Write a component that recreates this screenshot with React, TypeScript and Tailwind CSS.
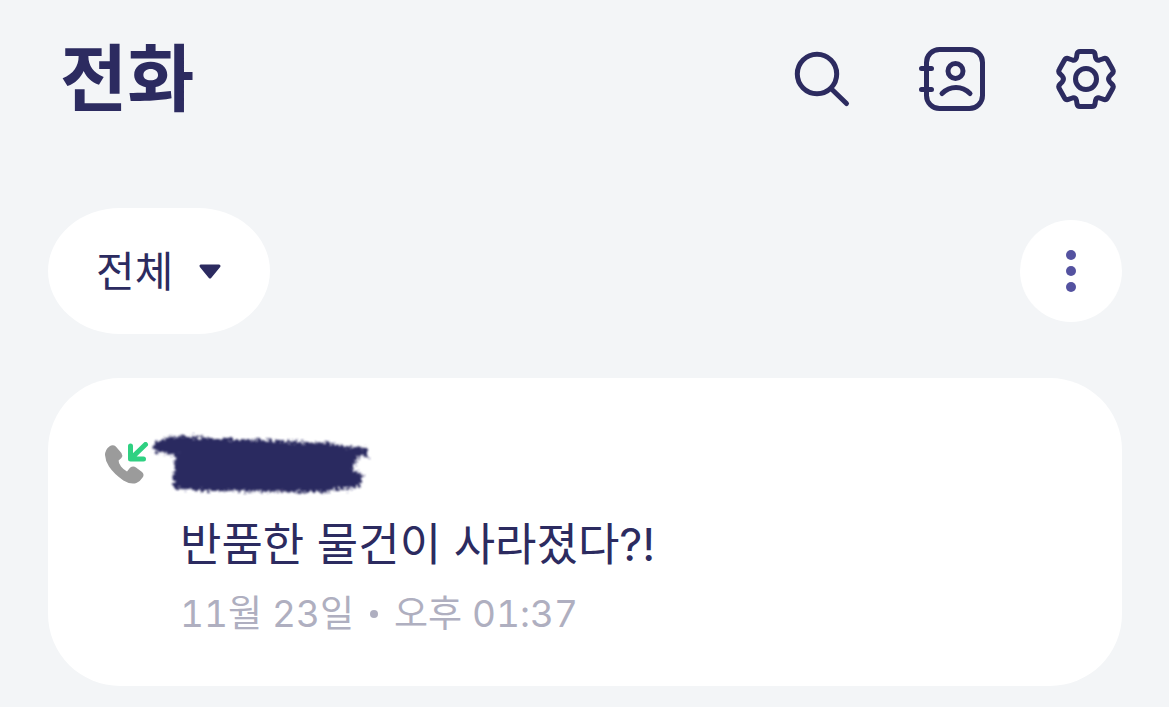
import { useState } from "react";

const font = "font-['Inter','Noto_Sans_CJK_KR',sans-serif]";

const calls = [
  { id: 1, message: "반품한 물건이 사라졌다?!", date: "11월 23일", time: "오후 01:37" },
];

function SearchIcon() {
  return (
    <svg className="overflow-visible" width="54" height="56" viewBox="0 0 54 56" fill="none" stroke="currentColor" strokeWidth="5" strokeLinecap="round">
      <circle cx="23" cy="23" r="19.7" />
      <path d="M38 38.5L52.5 52.5" />
    </svg>
  );
}

function ContactsIcon() {
  return (
    <svg width="66" height="64" viewBox="0 0 66 64" fill="none" stroke="currentColor" strokeWidth="5" strokeLinecap="round">
      <rect x="7.5" y="2.5" width="56" height="59" rx="13" />
      <path d="M2.5 21.5H12.5M2.5 42.5H12.5" />
      <circle cx="36.5" cy="24" r="7.5" />
      <path d="M23 46.5C31 38.5 43 38.5 51 46.5" />
    </svg>
  );
}

function SettingsIcon() {
  return (
    <svg width="60" height="60" viewBox="0 0 60 60" fill="none" stroke="currentColor" strokeWidth="5" strokeLinejoin="round">
      <path d="M24 2.5H36Q38.5 2.5 39 5L39.5 8.5Q40.3 12 43.5 11L47 9.8Q50 8.5 51.6 11.3L56.6 20.3Q58.2 23 55.8 25L53.8 27Q51.4 30 53.8 33L55.8 35Q58.2 37 56.6 39.7L51.6 48.7Q50 51.5 47 50.2L43.5 49Q40.3 48 39.5 51.5L39 55Q38.5 57.5 36 57.5H24Q21.5 57.5 21 55L20.5 51.5Q19.7 48 16.5 49L13 50.2Q10 51.5 8.4 48.7L3.4 39.7Q1.8 37 4.2 35L6.2 33Q8.6 30 6.2 27L4.2 25Q1.8 23 3.4 20.3L8.4 11.3Q10 8.5 13 9.8L16.5 11Q19.7 12 20.5 8.5L21 5Q21.5 2.5 24 2.5Z" />
      <circle cx="30" cy="30" r="10.5" />
    </svg>
  );
}

function IncomingCallIcon() {
  return (
    <svg className="shrink-0" width="45" height="44" viewBox="0 0 45 44" fill="none">
      <path
        fill="#9b9b9b"
        d="M4.3 4.4Q7.8 2 10.8 4.4L16.4 11Q18.2 13.6 16.4 16L13.6 18.6Q13.4 21.4 16 24.6Q18.6 28 22 29.4L25 25.8Q28 23.4 31 25.4L37 30Q39.6 32.6 37.8 35.2Q34.8 39.8 31.4 41Q25.6 42.8 18.4 38.4Q9.4 32.6 4 24.6Q0.4 19.2 0 13Q0 7.8 4.3 4.4Z"
      />
      <path stroke="#2fd182" strokeWidth="5" strokeLinecap="round" strokeLinejoin="round" d="M40.5 2.5L26 16.5M25.5 4V17H38.5" />
    </svg>
  );
}

// Nombre oculto: mancha de pincel con el borde rugoso
function HiddenName() {
  return (
    <svg className="overflow-visible" width="220" height="64" viewBox="0 0 220 64" role="img" aria-label="이름 숨김">
      <filter id="rough" x="-5%" y="-15%" width="110%" height="130%">
        <feTurbulence type="fractalNoise" baseFrequency="0.35" numOctaves="3" seed="4" />
        <feDisplacementMap in="SourceGraphic" scale="10" xChannelSelector="R" yChannelSelector="G" />
        <feGaussianBlur stdDeviation="0.8" />
      </filter>
      <path
        filter="url(#rough)"
        fill="#2c2b60"
        d="M18 5L30 4L57 6L113 8L180 11L192 14L217 16L217 24L206 25L203 39L211 41L212 49L207 56L190 57L173 60L140 60L100 59L57 59L24 57L23 48L26 23L12 21L4 19L3 12Z"
      />
    </svg>
  );
}

export default function App() {
  const [filter, setFilter] = useState("all");

  return (
    <div className={`min-h-screen bg-[#f3f5f7] text-[#2c2b60] ${font}`}>
      <header className="flex items-center justify-between pt-[34px] pl-[60px] pr-[53px]">
        <h1 className="text-[73px] leading-[90px] font-bold">전화</h1>
        <nav className="flex items-center gap-[71px]">
          <button aria-label="검색"><SearchIcon /></button>
          <button aria-label="연락처"><ContactsIcon /></button>
          <button aria-label="설정"><SettingsIcon /></button>
        </nav>
      </header>

      <main className="pl-12 pr-[47px] pb-5">
        <div className="mt-[84px] flex items-center justify-between">
          <div className="relative">
            <select
              aria-label="통화 필터"
              value={filter}
              onChange={(e) => setFilter(e.target.value)}
              className="h-[126px] w-[222px] appearance-none rounded-[72px/63px] bg-white pl-12 text-[42px]"
            >
              <option value="all">전체</option>
              <option value="missed">부재중</option>
            </select>
            <svg className="pointer-events-none absolute right-12 top-14" width="24" height="16" viewBox="0 0 24 16">
              <path fill="currentColor" stroke="currentColor" strokeWidth="3" strokeLinejoin="round" d="M3 2H21L12 13Z" />
            </svg>
          </div>
          <button aria-label="더보기" className="flex size-[102px] flex-col items-center justify-center gap-[6px] rounded-full bg-white">
            <span className="size-[10px] rounded-full bg-[#5452a0]"></span>
            <span className="size-[10px] rounded-full bg-[#5452a0]"></span>
            <span className="size-[10px] rounded-full bg-[#5452a0]"></span>
          </button>
        </div>

        <ul className="mt-11">
          {calls.map((call) => (
            <li key={call.id} className="rounded-[72px] bg-white pt-[54px] pb-[46px] pl-[57px] pr-12">
              <div className="flex items-center">
                <IncomingCallIcon />
                <HiddenName />
              </div>
              <div className="pl-[75px]">
                <p className="mt-4 text-[45px] leading-[66px]">{call.message}</p>
                <p className="mt-[10px] flex items-center gap-4 text-[37px] leading-[52px] tabular-nums text-[#afafc0]">
                  <span>{call.date}</span>
                  <span className="size-2 rounded-full bg-[#afafc0]"></span>
                  <span>{call.time}</span>
                </p>
              </div>
            </li>
          ))}
        </ul>
      </main>
    </div>
  );
}
